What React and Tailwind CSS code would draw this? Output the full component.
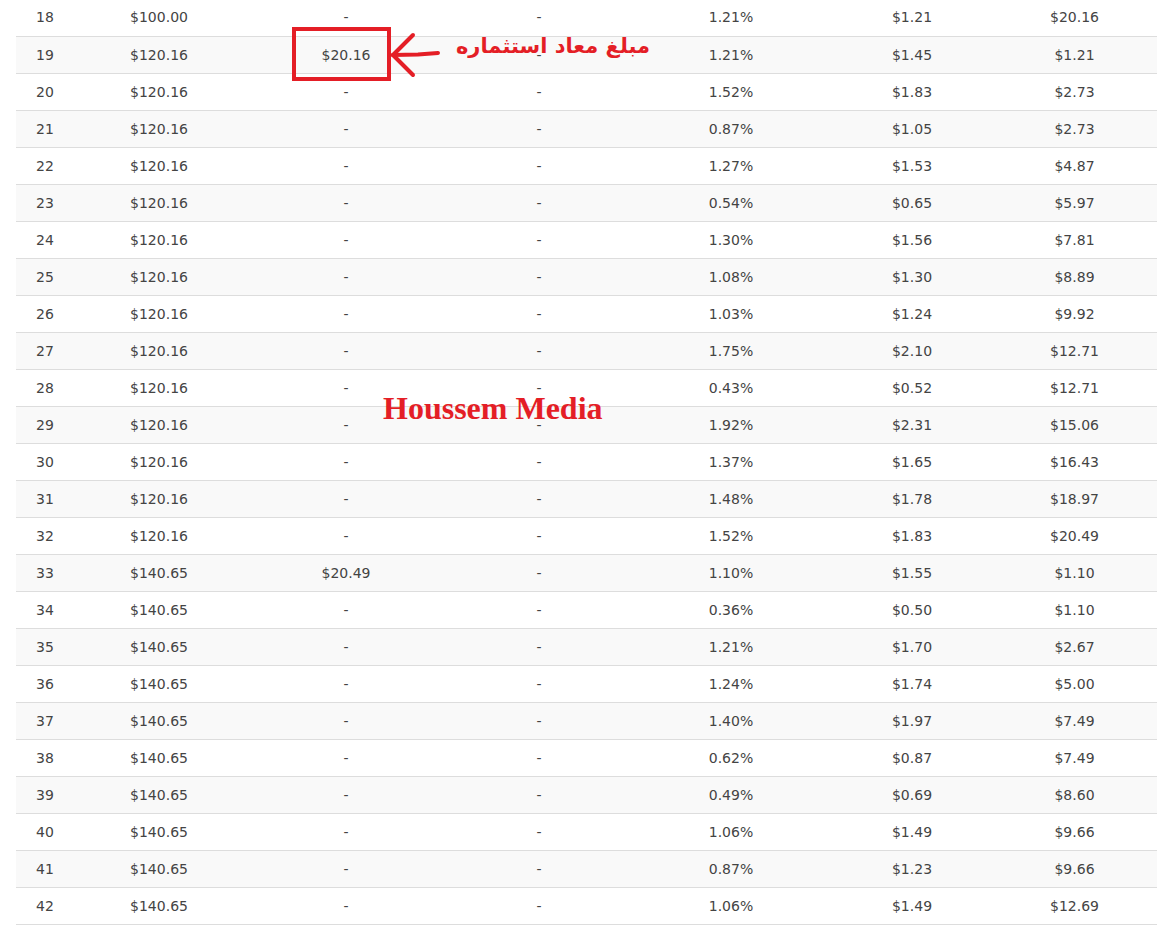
import React from "react";

const rows = [
  ["18", "$100.00", "-", "-", "1.21%", "$1.21", "$20.16"],
  ["19", "$120.16", "$20.16", "-", "1.21%", "$1.45", "$1.21"],
  ["20", "$120.16", "-", "-", "1.52%", "$1.83", "$2.73"],
  ["21", "$120.16", "-", "-", "0.87%", "$1.05", "$2.73"],
  ["22", "$120.16", "-", "-", "1.27%", "$1.53", "$4.87"],
  ["23", "$120.16", "-", "-", "0.54%", "$0.65", "$5.97"],
  ["24", "$120.16", "-", "-", "1.30%", "$1.56", "$7.81"],
  ["25", "$120.16", "-", "-", "1.08%", "$1.30", "$8.89"],
  ["26", "$120.16", "-", "-", "1.03%", "$1.24", "$9.92"],
  ["27", "$120.16", "-", "-", "1.75%", "$2.10", "$12.71"],
  ["28", "$120.16", "-", "-", "0.43%", "$0.52", "$12.71"],
  ["29", "$120.16", "-", "-", "1.92%", "$2.31", "$15.06"],
  ["30", "$120.16", "-", "-", "1.37%", "$1.65", "$16.43"],
  ["31", "$120.16", "-", "-", "1.48%", "$1.78", "$18.97"],
  ["32", "$120.16", "-", "-", "1.52%", "$1.83", "$20.49"],
  ["33", "$140.65", "$20.49", "-", "1.10%", "$1.55", "$1.10"],
  ["34", "$140.65", "-", "-", "0.36%", "$0.50", "$1.10"],
  ["35", "$140.65", "-", "-", "1.21%", "$1.70", "$2.67"],
  ["36", "$140.65", "-", "-", "1.24%", "$1.74", "$5.00"],
  ["37", "$140.65", "-", "-", "1.40%", "$1.97", "$7.49"],
  ["38", "$140.65", "-", "-", "0.62%", "$0.87", "$7.49"],
  ["39", "$140.65", "-", "-", "0.49%", "$0.69", "$8.60"],
  ["40", "$140.65", "-", "-", "1.06%", "$1.49", "$9.66"],
  ["41", "$140.65", "-", "-", "0.87%", "$1.23", "$9.66"],
  ["42", "$140.65", "-", "-", "1.06%", "$1.49", "$12.69"],
];

export default function App() {
  return (
    <div className="relative w-[1159px] h-[929px] bg-white overflow-hidden">
      <table
        className="-mt-px ml-[16px] w-[1141px] table-fixed border-collapse text-[14px] text-[#444]"
        style={{ fontFamily: '"DejaVu Sans", Verdana, sans-serif' }}
      >
        <colgroup>
          <col className="w-[58px]" />
          <col className="w-[170px]" />
          <col className="w-[204px]" />
          <col className="w-[182px]" />
          <col className="w-[202px]" />
          <col className="w-[160px]" />
          <col className="w-[165px]" />
        </colgroup>
        <tbody>
          {rows.map((r, i) => (
            <tr
              key={r[0]}
              className={`h-[37px] border-b border-[#dddddd] ${i % 2 === 1 ? "bg-[#f9f9f9]" : "bg-white"}`}
            >
              {r.map((c, j) => (
                <td key={j} className="p-0 text-center align-middle leading-[36px]">
                  {c}
                </td>
              ))}
            </tr>
          ))}
        </tbody>
      </table>

      {/* annotation: red box */}
      <div className="absolute left-[292px] top-[27px] w-[99px] h-[54px] border-[4px] border-[#e41e26]" />

      {/* annotation: arrow */}
      <svg className="absolute left-[388px] top-[30px]" width="60" height="50" viewBox="0 0 60 50">
        <g stroke="#e41e26" strokeWidth="4" strokeLinecap="round" fill="none">
          <path d="M5 25 L25 5" />
          <path d="M5 25 L25 45" />
          <path d="M5 25 L30 24.5 L50 23" />
        </g>
      </svg>

      {/* annotation: arabic text */}
      <div
        dir="rtl"
        className="absolute left-[455px] top-[26px] w-[196px] text-center font-bold text-[#e41e26] text-[21px] leading-[40px] whitespace-nowrap"
        style={{ fontFamily: '"DejaVu Sans", sans-serif' }}
      >
        مبلغ معاد استثماره
      </div>

      {/* watermark */}
      <div
        className="absolute left-[383px] top-[389px] font-bold text-[#e41e26] text-[32px] leading-[38px] whitespace-nowrap"
        style={{ fontFamily: '"Liberation Serif", "Times New Roman", serif' }}
      >
        Houssem Media
      </div>
    </div>
  );
}
